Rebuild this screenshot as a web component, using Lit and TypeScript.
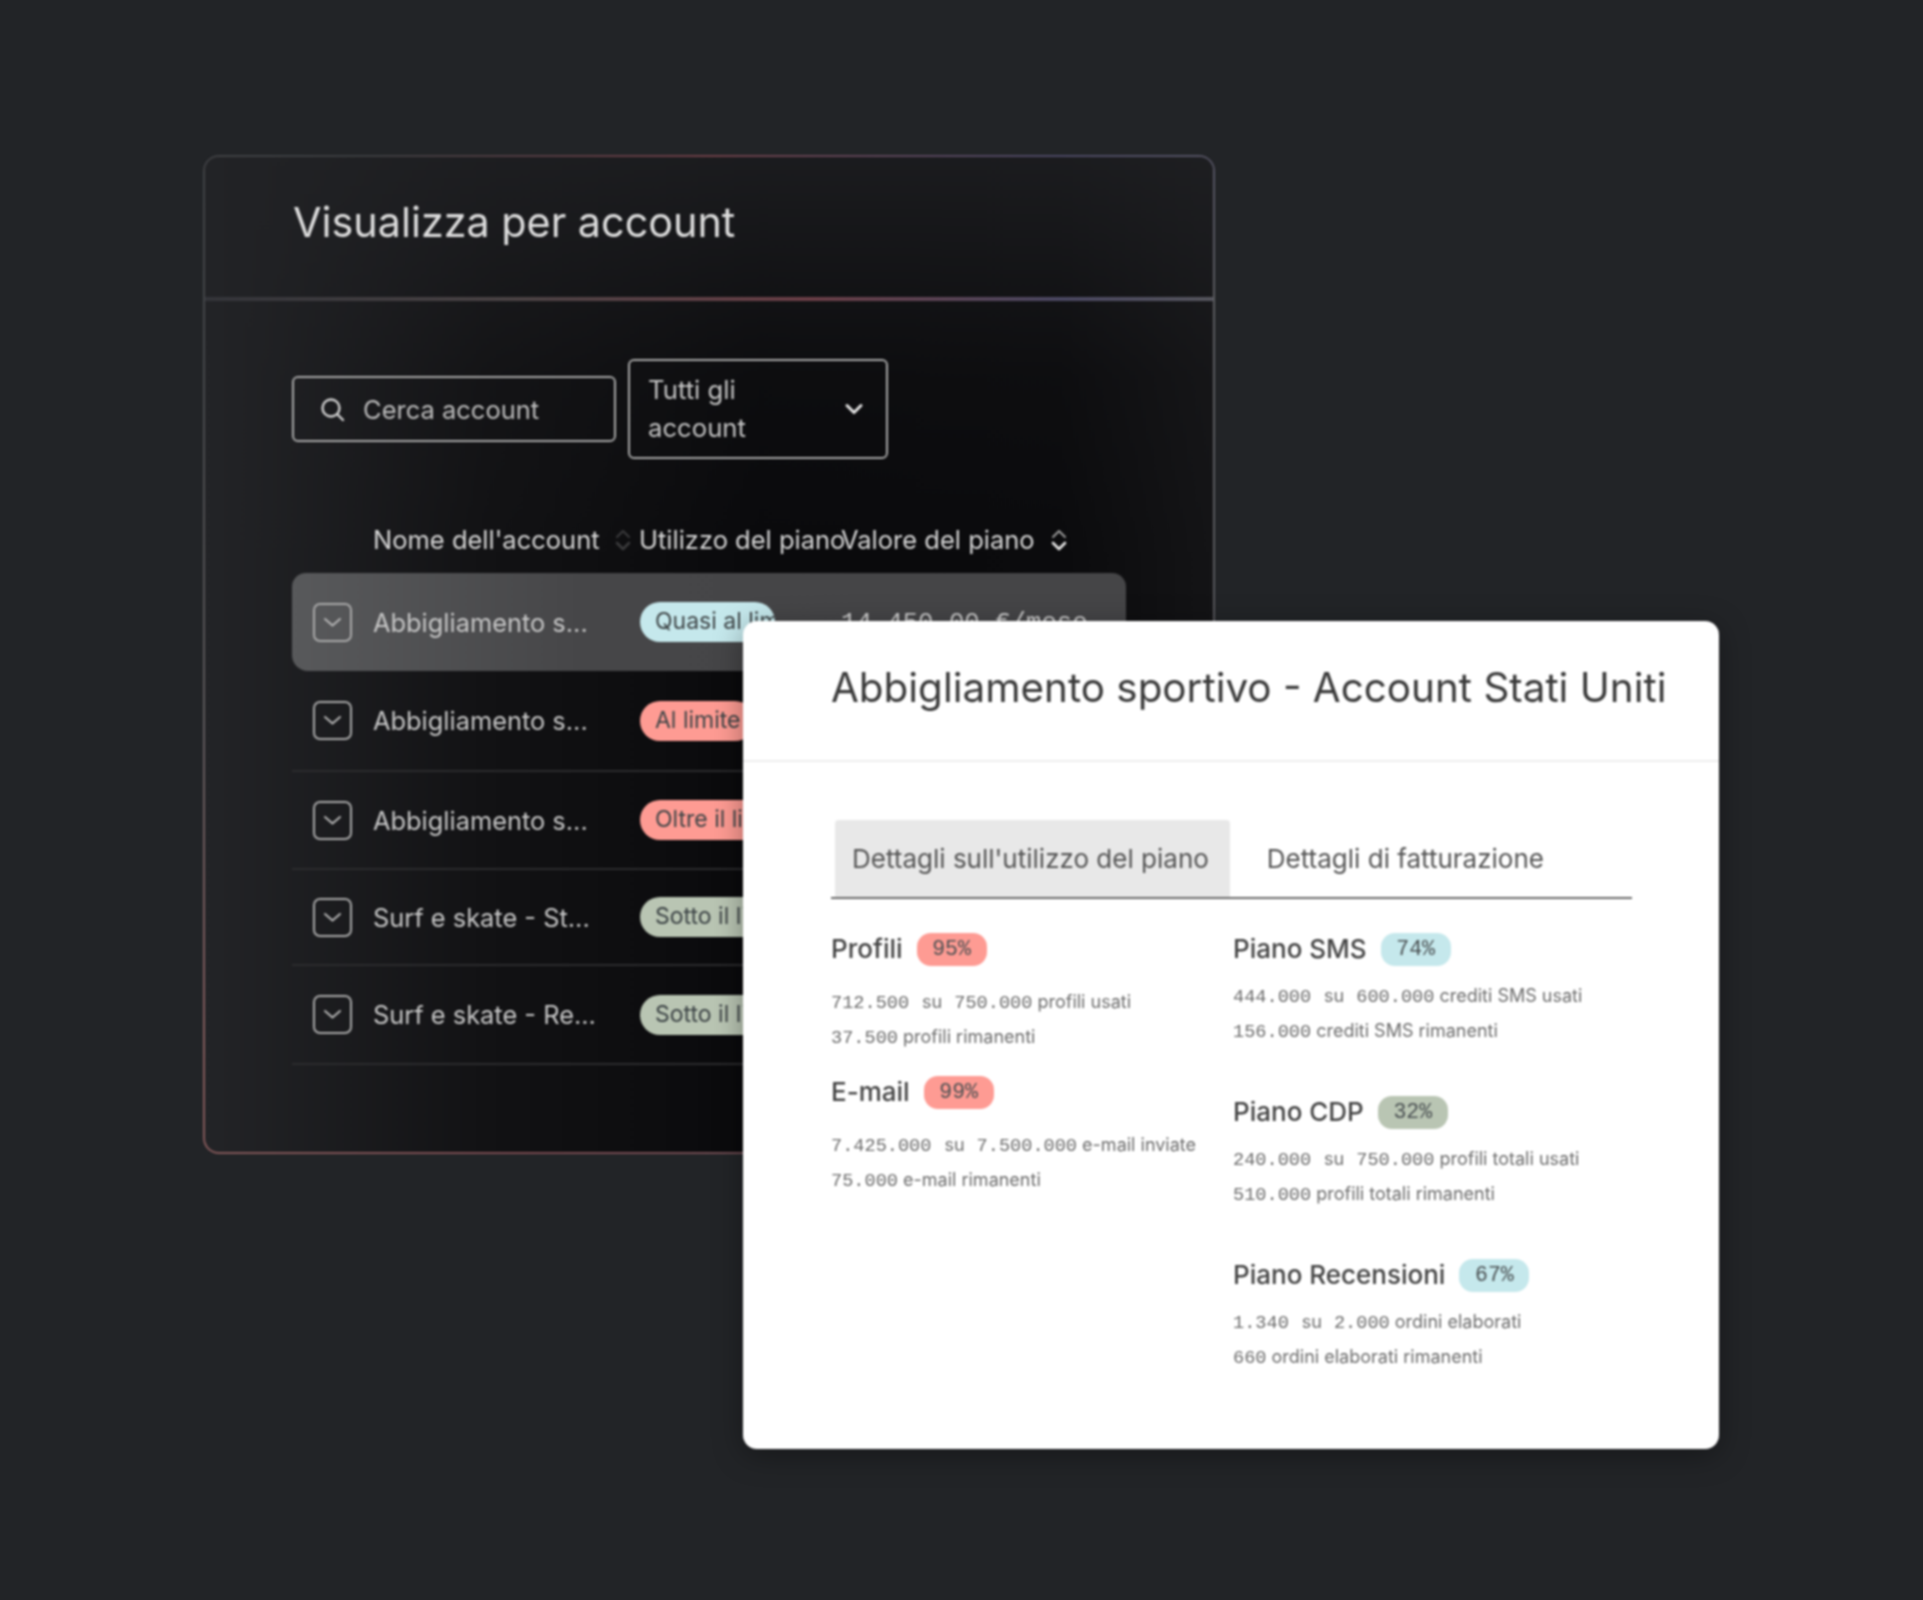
import { LitElement, html, css, svg } from "lit";
import { customElement } from "lit/decorators.js";

const chevronBox = html`<svg class="check" viewBox="0 0 39 39" fill="none">
  <rect x="1" y="1" width="37" height="37" rx="6" stroke="#a9a9a9" stroke-width="2"/>
  <path d="M12 16l7.500 6.500L27 16" stroke="#b5b5b5" stroke-width="2" stroke-linecap="round" stroke-linejoin="round"/>
</svg>`;

const sortIcon = (upColor: string, downColor: string) => html`<svg class="sort" viewBox="0 0 18 26" fill="none">
  ${svg`<path d="M3 10l6-6 6 6" stroke=${upColor} stroke-width="2" stroke-linecap="round" stroke-linejoin="round"/>
  <path d="M3 16l6 6 6-6" stroke=${downColor} stroke-width="2.600" stroke-linecap="round" stroke-linejoin="round"/>`}
</svg>`;

const rows = [
  { h: 98, name: "Abbigliamento s...", badge: "Quasi al limite", tone: "blue", value: "14.450,00 €/mese" },
  { h: 101, name: "Abbigliamento s...", badge: "Al limite", tone: "red" },
  { h: 98, name: "Abbigliamento s...", badge: "Oltre il limite", tone: "red" },
  { h: 96, name: "Surf e skate - St...", badge: "Sotto il limite", tone: "green" },
  { h: 99, name: "Surf e skate - Re...", badge: "Sotto il limite", tone: "green" },
];

const leftBlocks = [
  { title: "Profili", pct: "95%", tone: "red", used: "712.500", total: "750.000", usedLabel: "profili usati", rest: "37.500", restLabel: "profili rimanenti" },
  { title: "E-mail", pct: "99%", tone: "red", used: "7.425.000", total: "7.500.000", usedLabel: "e-mail inviate", rest: "75.000", restLabel: "e-mail rimanenti" },
];
const rightBlocks = [
  { title: "Piano SMS", pct: "74%", tone: "blue", used: "444.000", total: "600.000", usedLabel: "crediti SMS usati", rest: "156.000", restLabel: "crediti SMS rimanenti" },
  { title: "Piano CDP", pct: "32%", tone: "green", used: "240.000", total: "750.000", usedLabel: "profili totali usati", rest: "510.000", restLabel: "profili totali rimanenti" },
  { title: "Piano Recensioni", pct: "67%", tone: "blue", used: "1.340", total: "2.000", usedLabel: "ordini elaborati", rest: "660", restLabel: "ordini elaborati rimanenti" },
];

type Block = (typeof leftBlocks)[number];

@customElement("app-root")
export class AppRoot extends LitElement {
  static styles = css`
    :host {
      display: block;
      width: 1923px;
      height: 1600px;
      background: #222427;
      font-family: Inter, "Liberation Sans", sans-serif;
      overflow: hidden;
    }
    .stage {
      position: relative;
      box-sizing: border-box;
      height: 1600px;
      padding: 155px 0 0 203px;
      filter: blur(0.9px);
    }
    .dark {
      box-sizing: border-box;
      width: 1012px;
      height: 999px;
      border: 2px solid transparent;
      border-radius: 16px;
      background:
        linear-gradient(180deg, rgba(34, 35, 38, 0.7) 0, rgba(34, 35, 38, 0.12) 22%, rgba(10, 10, 12, 0) 40%) padding-box,
        linear-gradient(90deg, #232427 0, #121214 28%, #0a0a0c 55%, #0b0b0d 85%, #141416 100%) padding-box,
        conic-gradient(from 0deg, #6e3f47 0deg, #4c4864 35deg, #5c5c60 55deg, #545459 120deg, #6d4f55 165deg, #7a4a50 200deg, #855c5c 232deg, #5f5a5c 262deg, #46474a 300deg, #3b3c3f 325deg, #5a3b42 345deg, #6e3f47 360deg) border-box;
    }
    .dark-head {
      box-sizing: border-box;
      height: 140px;
      padding: 43px 0 0 88px;
      font-size: 41.300px;
      line-height: 44px;
      color: #dcdcdc;
    }
    .dark-line {
      height: 4px;
      background: linear-gradient(90deg, #34353a 0, #4a4345 30%, #6b3f47 60%, #4b4862 85%, #56565e 100%);
    }
    .toolbar {
      display: flex;
      align-items: center;
      gap: 12px;
      margin: 58px 0 0 87px;
    }
    .search {
      box-sizing: border-box;
      display: flex;
      align-items: center;
      gap: 17px;
      width: 324px;
      height: 66px;
      padding-left: 24px;
      border: 2px solid #a8a8a8;
      border-radius: 6px;
      color: #bdbdbd;
      font-size: 25.500px;
    }
    .search svg { width: 28px; height: 28px; }
    .select {
      box-sizing: border-box;
      display: flex;
      align-items: center;
      justify-content: space-between;
      width: 260px;
      height: 100px;
      padding: 0 20px 0 18px;
      border: 2px solid #a8a8a8;
      border-radius: 6px;
      color: #c4c4c4;
      font-size: 25.700px;
      line-height: 38px;
    }
    .select svg { width: 24px; height: 24px; }
    .cols {
      display: grid;
      grid-template-columns: 81px 266px 202px 1fr;
      align-items: start;
      box-sizing: border-box;
      width: 834px;
      height: 114px;
      margin-left: 87px;
      padding-top: 62px;
      color: #d6d6d6;
      font-size: 25.500px;
      line-height: 38px;
      white-space: nowrap;
    }
    .col-cell { display: flex; align-items: center; }
    .sort { width: 18px; height: 26px; flex: none; display: block; }
    .sort-a { margin-left: 14px; }
    .sort-b { margin-left: 15px; }
    .row {
      display: grid;
      grid-template-columns: 60px 267px 201px 1fr;
      align-items: center;
      box-sizing: border-box;
      width: 834px;
      margin-left: 87px;
      padding-left: 21px;
      border-bottom: 2px solid #2b2b2d;
      color: #c6c6c6;
      font-size: 25.400px;
      white-space: nowrap;
    }
    .row.first {
      border-bottom: 0;
      border-radius: 14px 14px 16px 16px;
      background: linear-gradient(90deg, #58595b 0, #464648 35%, #454547 100%);
    }
    .check { width: 39px; height: 39px; display: block; }
    .badge {
      justify-self: start;
      box-sizing: border-box;
      height: 40px;
      padding: 0 15px;
      border-radius: 20px;
      font-size: 23px;
      line-height: 39px;
      color: #3d4446;
    }
    .first .badge { width: 135px; overflow: hidden; }
    .value {
      margin-top: 3px;
      font-family: "Liberation Mono", monospace;
      font-size: 25.700px;
      color: #cccccc;
    }
    .blue { background: #c5e8ec; }
    .red { background: #fe9b93; }
    .green { background: #b9c5b3; }
    .white {
      position: absolute;
      left: 743px;
      top: 621px;
      width: 976px;
      height: 828px;
      border-radius: 14px;
      background: #fff;
      box-shadow: 0 6px 30px rgba(0, 0, 0, 0.35);
      color: #3c3c3c;
    }
    .white-head {
      box-sizing: border-box;
      height: 141px;
      padding: 45px 0 0 88px;
      border-bottom: 2px solid #eeeeee;
      font-size: 40.400px;
      line-height: 44px;
      color: #3a3a3a;
      white-space: nowrap;
    }
    .tabs {
      display: flex;
      box-sizing: border-box;
      height: 79px;
      width: 801px;
      margin: 58px 0 0 88px;
      padding-left: 4px;
      border-bottom: 2px solid #6a6a6a;
      font-size: 26px;
      line-height: 77px;
      color: #555;
      white-space: nowrap;
    }
    .tab { padding: 0 21px 0 17px; }
    .tab.active { background: #e8e8e8; border-radius: 4px 4px 0 0; }
    .tab.other { padding-left: 37px; }
    .grid {
      display: grid;
      grid-template-columns: 402px 1fr;
      padding: 32px 0 0 88px;
    }
    .block-title {
      display: flex;
      align-items: center;
      gap: 14px;
      height: 34px;
      font-size: 26px;
      font-weight: 500;
      color: #444;
      white-space: nowrap;
    }
    .pct {
      box-sizing: border-box;
      width: 70px;
      height: 33px;
      margin-top: 3px;
      border-radius: 14px;
      text-align: center;
      font-family: "Liberation Mono", monospace;
      font-size: 21.500px;
      line-height: 33px;
      color: #4a5052;
    }
    .line {
      height: 35px;
      line-height: 35px;
      font-size: 18px;
      color: #6c6c6c;
      white-space: nowrap;
    }
    .num { font-family: "Liberation Mono", monospace; font-size: 18.600px; }
    .su { margin: 0 12px 0 13px; }
    .left .block { margin-bottom: 20px; }
    .left .lines { margin-top: 19px; }
    .right .block { margin-bottom: 46px; }
    .right .lines { margin-top: 13px; }
  `;

  private block(b: Block) {
    return html`<div class="block">
      <div class="block-title">${b.title}<span class="pct ${b.tone}">${b.pct}</span></div>
      <div class="lines">
        <div class="line"><span class="num">${b.used}</span><span class="su">su</span><span class="num">${b.total}</span> ${b.usedLabel}</div>
        <div class="line"><span class="num">${b.rest}</span> ${b.restLabel}</div>
      </div>
    </div>`;
  }

  render() {
    return html`<div class="stage">
      <section class="dark">
        <div class="dark-head">Visualizza per account</div>
        <div class="dark-line"></div>
        <div class="toolbar">
          <div class="search">
            <svg viewBox="0 0 28 28" fill="none" stroke="#d0d0d0" stroke-width="2.400" stroke-linecap="round">
              <circle cx="13" cy="13" r="8.500"/><path d="M19.500 19.500L25 25"/>
            </svg>
            Cerca account
          </div>
          <div class="select">
            <span>Tutti gli<br />account</span>
            <svg viewBox="0 0 24 24" fill="none" stroke="#e4e4e4" stroke-width="3" stroke-linecap="round" stroke-linejoin="round">
              <path d="M5 8.500l7 7 7-7"/>
            </svg>
          </div>
        </div>
        <div class="cols">
          <span></span>
          <span class="col-cell">Nome dell'account<span class="sort-a">${sortIcon("#3a3a3c", "#3a3a3c")}</span></span>
          <span class="col-cell">Utilizzo del piano</span>
          <span class="col-cell">Valore del piano<span class="sort-b">${sortIcon("#9a9a9a", "#e8e8e8")}</span></span>
        </div>
        ${rows.map(
          (r, i) => html`<div class="row ${i === 0 ? "first" : ""}" style="height:${r.h}px">
            ${chevronBox}
            <span>${r.name}</span>
            <span class="badge ${r.tone}">${r.badge}</span>
            ${r.value ? html`<span class="value">${r.value}</span>` : ""}
          </div>`
        )}
      </section>
      <section class="white">
        <div class="white-head">Abbigliamento sportivo - Account Stati Uniti</div>
        <div class="tabs">
          <div class="tab active">Dettagli sull'utilizzo del piano</div>
          <div class="tab other">Dettagli di fatturazione</div>
        </div>
        <div class="grid">
          <div class="left">${leftBlocks.map((b) => this.block(b))}</div>
          <div class="right">${rightBlocks.map((b) => this.block(b))}</div>
        </div>
      </section>
    </div>`;
  }
}
